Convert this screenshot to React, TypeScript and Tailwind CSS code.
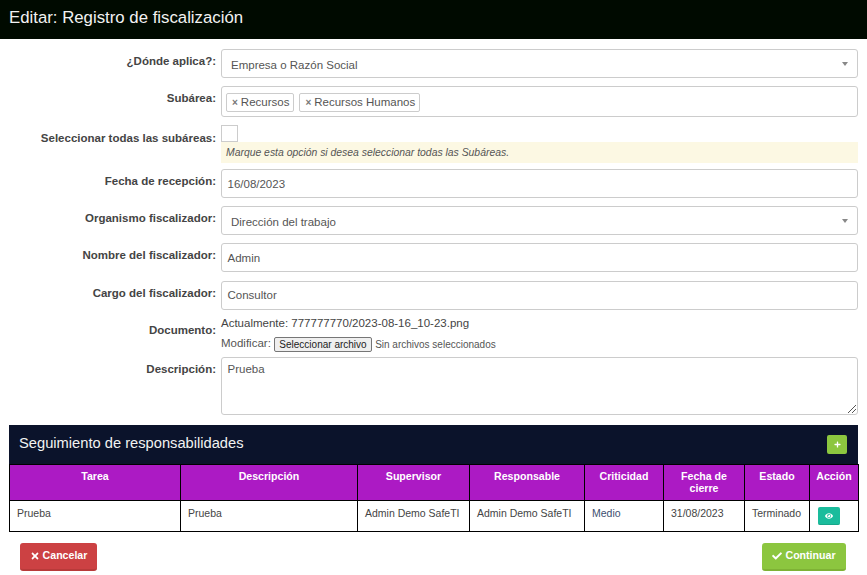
import { FaCheck, FaEye, FaPlus, FaTimes } from "react-icons/fa";
import type { ReactNode } from "react";

function Row({ label, children, className, labelClass }: { label: string; children: ReactNode; className?: string; labelClass?: string }) {
  return (
    <div className={"flex " + (className ?? "")}>
      <label className={"w-[216px] shrink-0 text-right text-[11.5px] font-bold leading-[17px] text-[#444] " + (labelClass ?? "pt-[4px]")}>{label}</label>
      <div className="ml-[5px] w-[637px]">{children}</div>
    </div>
  );
}

const box = "w-full rounded-[3px] border border-[#ccc] bg-white text-[11.5px] text-[#555]";

function Select({ value }: { value: string }) {
  return (
    <div className={box + " flex h-[29px] items-center justify-between pl-[9px] pr-[9px]"}>
      <span className="pt-[5px]">{value}</span>
      <span className="h-0 w-0 border-x-[3.5px] border-t-[4px] border-x-transparent border-t-[#888]" />
    </div>
  );
}

function Input({ value, pad }: { value: string; pad?: string }) {
  return <div className={box + " flex h-[29px] items-center pl-[5.5px] " + (pad ?? "pt-[3px]")}>{value}</div>;
}

function Tag({ text }: { text: string }) {
  return (
    <span className="flex h-[19px] items-center rounded-[2px] border border-[#ccc] pl-[5px] pr-[4px] pt-[1px] text-[11.5px] text-[#555]">
      <span className="mr-[3px] text-[10px] font-bold text-[#777]">×</span>
      {text}
    </span>
  );
}

const ths: [string, string][] = [
  ["Tarea", "w-[171px]"],
  ["Descripción", "w-[177px]"],
  ["Supervisor", "w-[112px]"],
  ["Responsable", "w-[115px]"],
  ["Criticidad", "w-[79px]"],
  ["Fecha de cierre", "w-[81px]"],
  ["Estado", "w-[65px]"],
  ["Acción", "w-[49px]"],
];

const tds: [string, string][] = [
  ["Prueba", ""],
  ["Prueba", ""],
  ["Admin Demo SafeTI", ""],
  ["Admin Demo SafeTI", ""],
  ["Medio", "text-[#3d4f70]"],
  ["31/08/2023", ""],
  ["Terminado", ""],
];

export default function App() {
  return (
    <div className="h-[575px] w-[867px] overflow-hidden bg-white font-['Liberation_Sans',Arial,sans-serif]">
      <header className="flex h-[39px] items-center bg-[#000a00] pb-[3px] pl-[9px] text-[16.8px] text-[#f2f2f2]">Editar: Registro de fiscalización</header>

      <div className="flex flex-col pt-[10px]">
        <Row label="¿Dónde aplica?:"><Select value="Empresa o Razón Social" /></Row>
        <Row label="Subárea:" className="mt-[8px]">
          <div className={box + " flex h-[31px] items-center gap-[5px] pl-[4px] pt-[1px]"}>
            <Tag text="Recursos" />
            <Tag text="Recursos Humanos" />
          </div>
        </Row>
        <Row label="Seleccionar todas las subáreas:" className="mt-[8px]" labelClass="pt-[5px]">
          <div className="h-[17px] w-[17px] border border-[#ccc] bg-white" />
          <div className="flex h-[21px] items-center bg-[#fcf8e3] pl-[5px] text-[10.4px] italic text-[#555]">Marque esta opción si desea seleccionar todas las Subáreas.</div>
        </Row>
        <Row label="Fecha de recepción:" className="mt-[6px]"><Input value="16/08/2023" /></Row>
        <Row label="Organismo fiscalizador:" className="mt-[8px]"><Select value="Dirección del trabajo" /></Row>
        <Row label="Nombre del fiscalizador:" className="mt-[8px]"><Input value="Admin" /></Row>
        <Row label="Cargo del fiscalizador:" className="mt-[9px]"><Input value="Consultor" pad="pt-[1px]" /></Row>
        <Row label="Documento:" className="mt-[6px]" labelClass="pt-[6px]">
          <div className="h-[19px] text-[11.5px] leading-[15px] text-[#444]">Actualmente: 777777770/2023-08-16_10-23.png</div>
          <div className="flex h-[18px] items-center text-[10px] text-[#555]">
            <span className="text-[11.5px]">Modificar:</span>
            <span className="ml-[3px] flex h-[15px] items-center rounded-[2px] border border-[#767676] bg-[#efefef] px-[4.5px] text-[#222]">Seleccionar archivo</span>
            <span className="ml-[3px]">Sin archivos seleccionados</span>
          </div>
        </Row>
        <Row label="Descripción:" className="mt-[4px]" labelClass="pt-[4px]">
          <div className={box + " relative h-[58px] pl-[5.5px] pt-[3px]"}>
            Prueba
            <svg className="absolute bottom-[1px] right-[1px]" width="9" height="9" viewBox="0 0 9 9" stroke="#555" strokeWidth="1"><path d="M1 9 9 1M5 9 9 5" /></svg>
          </div>
        </Row>
      </div>

      <div className="ml-[9px] mt-[10px] flex h-[39px] w-[849px] items-center justify-between bg-[#0b132b] pl-[10px] pr-[11px] text-[14.7px] text-[#f2f2f2]">
        <span className="pb-[2px]">Seguimiento de responsabilidades</span>
        <span className="flex h-[19px] w-[20px] items-center justify-center rounded-[2px] bg-[#8cc63f] text-white"><FaPlus size={7} /></span>
      </div>

      <table className="ml-[9px] w-[850px] table-fixed border-collapse border border-black text-[10.5px]">
        <thead>
          <tr className="h-[36px] bg-[#ac1ac4] text-white">
            {ths.map(([t, w]) => (
              <th key={t} className={w + " border border-black px-[5px] pb-[4px] pt-[5px] align-top text-[10.6px] font-bold leading-[12px]"}>{t}</th>
            ))}
          </tr>
        </thead>
        <tbody>
          <tr className="h-[31px] text-[#444]">
            {tds.map(([t, c], i) => (
              <td key={i} className={"border border-black pl-[7px] pr-0 pt-[6px] align-top leading-[12px] " + c}>{t}</td>
            ))}
            <td className="border border-black pl-[8px] pt-[6px] align-top">
              <span className="flex h-[18px] w-[22px] items-center justify-center rounded-[2px] border-b border-[#17a689] bg-[#1abc9c] text-white"><FaEye size={8} /></span>
            </td>
          </tr>
        </tbody>
      </table>

      <div className="ml-[20px] mt-[11px] flex w-[826px] justify-between text-[10.6px] font-bold text-white">
        <button className="flex h-[28px] w-[77px] items-center justify-center gap-[3px] rounded-[3px] border-b-2 border-[#b83a3a] bg-[#cc4143]"><FaTimes size={10} />Cancelar</button>
        <button className="flex h-[28px] w-[84px] items-center justify-center gap-[3px] rounded-[3px] border-b-2 border-[#7eb235] bg-[#8cc63f]"><FaCheck size={10} />Continuar</button>
      </div>
    </div>
  );
}
